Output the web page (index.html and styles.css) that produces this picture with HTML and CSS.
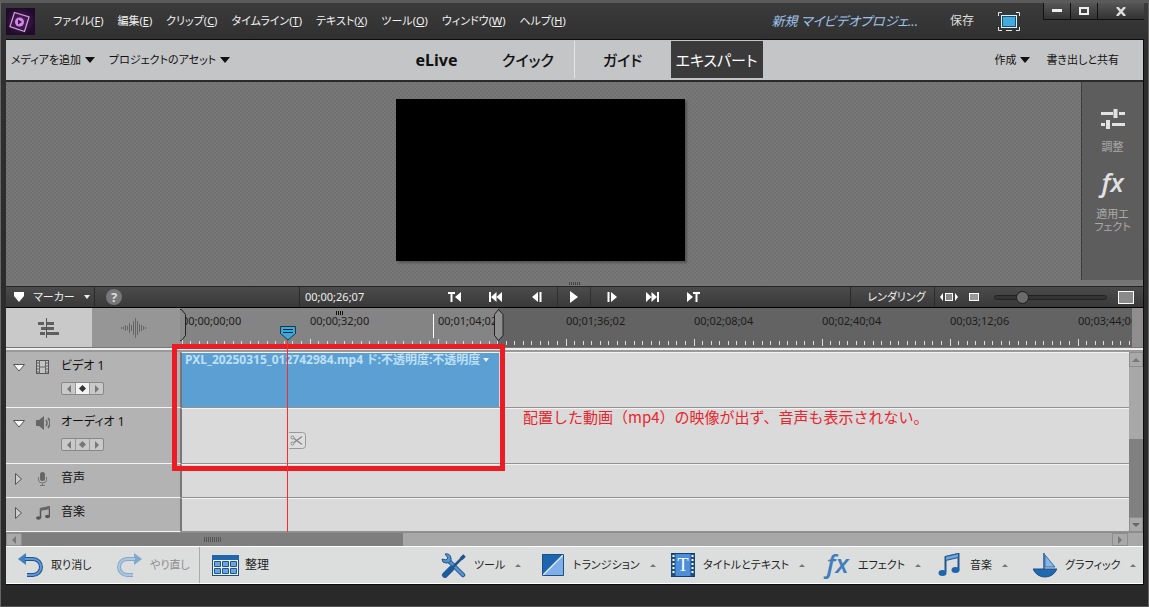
FILE: index.html
```html
<!DOCTYPE html>
<html lang="ja">
<head>
    <meta charset="utf-8">
    <title>新規 マイビデオプロジェクト</title>
    <link rel="stylesheet" href="styles.css">
</head>
<body>
<div class="app">
    <header class="titlebar">
        <svg class="logo" viewBox="0 0 29 27">
            <defs><radialGradient id="lg"><stop offset="0" stop-color="#5b2168"/><stop offset="1" stop-color="#210b2d"/></radialGradient></defs>
            <rect width="29" height="27" fill="url(#lg)"/>
            <path d="M8.500 4.500L23 9l-4.500 14.500L4 18.500z" fill="none" stroke="#c9a3d4" stroke-width="1.300"/>
            <circle cx="13.500" cy="14" r="4.500" fill="#d08be6"/>
            <path d="M12 11.500l4 2.500-4 2.500z" fill="#3a1248"/>
        </svg>
        <nav class="menu">
            <button>ファイル(<u>F</u>)</button>
            <button>編集(<u>E</u>)</button>
            <button>クリップ(<u>C</u>)</button>
            <button>タイムライン(<u>T</u>)</button>
            <button>テキスト(<u>X</u>)</button>
            <button>ツール(<u>O</u>)</button>
            <button>ウィンドウ(<u>W</u>)</button>
            <button>ヘルプ(<u>H</u>)</button>
        </nav>
        <span class="project">新規 マイビデオプロジェ...</span>
        <button class="save">保存</button>
        <button class="fullscreen" aria-label="全画面">
            <svg width="22" height="19" viewBox="0 0 22 19">
                <path d="M.5 4V.5H4M18 .5h3.500V4M21.500 15v3.500H18M4 18.500H.5V15M8 18.500h6" fill="none" stroke="#e8e8e8"/>
                <rect x="3.500" y="3.500" width="15" height="12" fill="#42aade" stroke="#d5f2ff"/>
                <rect x="4.500" y="4.500" width="13" height="10" fill="none" stroke="#1d4f6b"/>
            </svg>
        </button>
        <div class="winbtns">
            <button class="win min" aria-label="最小化"><svg width="10" height="4"><rect width="10" height="3" fill="#eee"/></svg></button>
            <button class="win max" aria-label="最大化"><svg width="10" height="8"><rect x="1" y="1" width="8" height="6" fill="none" stroke="#eee" stroke-width="2"/></svg></button>
            <button class="win close" aria-label="閉じる"><svg width="10" height="9"><path d="M1 0l8 9M9 0L1 9" stroke="#ddd" stroke-width="2.500"/></svg></button>
        </div>
    </header>

    <main class="work">
        <div class="modebar">
            <div class="side">
                <button class="drop">メディアを追加<i class="down"></i></button>
                <button class="drop">プロジェクトのアセット<i class="down"></i></button>
            </div>
            <div class="modes">
                <button class="mode live">eLive</button>
                <button class="mode quick">クイック</button>
                <button class="mode guide">ガイド</button>
                <button class="mode expert">エキスパート</button>
            </div>
            <div class="side end">
                <button class="drop">作成<i class="down"></i></button>
                <button class="drop">書き出しと共有</button>
            </div>
        </div>

        <div class="monitor">
            <div class="stage"><div class="preview"></div></div>
            <aside class="tools">
                <button class="tool">
                    <svg width="24" height="20" viewBox="0 0 24 20"><path d="M0 4.500h12M18 4.500h6M0 15.500h4M11 15.500h13" stroke="#e2e2e2" stroke-width="3"/><path d="M14.500 0v9M7 11v9" stroke="#e2e2e2" stroke-width="4"/></svg>
                    調整
                </button>
                <button class="tool">
                    <span class="fx">fx</span>
                    適用エ<br>フェクト
                </button>
            </aside>
        </div>
        <div class="splitter"><svg width="12" height="3"><path d="M.5 0v3M2.500 0v3M4.500 0v3M6.500 0v3M8.500 0v3M10.500 0v3" stroke="#444"/></svg></div>

        <div class="transport">
            <button class="marker"><svg width="10" height="10"><path d="M0 0h10v4L5 10 0 4z" fill="#fff"/></svg>マーカー<i class="small-down"></i></button>
            <div class="helpcell"><button class="help">?</button></div>
            <span class="time">00;00;26;07</span>
            <button class="tb" aria-label="前のマーカー"><svg width="13" height="10"><path d="M0 0h7v2H4.500v8h-2V2H0zM13 0v10L7 5z"/></svg></button>
            <button class="tb" aria-label="前の編集点"><svg width="13" height="10"><path d="M0 0h2v10H0zM7.500 0v10L2 5zM13 0v10L7.500 5z"/></svg></button>
            <button class="tb" aria-label="コマ戻し"><svg width="10" height="10"><path d="M6 0v10L0 5zM7.500 0h2v10h-2z"/></svg></button>
            <button class="tb play" aria-label="再生"><svg width="8" height="12"><path d="M0 0l8 6-8 6z"/></svg></button>
            <button class="tb" aria-label="コマ送り"><svg width="10" height="10"><path d="M4 0v10l6-5zM.5 0h2v10h-2z"/></svg></button>
            <button class="tb" aria-label="次の編集点"><svg width="13" height="10"><path d="M11 0h2v10h-2zM0 0v10l5.500-5zM5.500 0v10L11 5z"/></svg></button>
            <button class="tb" aria-label="次のマーカー"><svg width="13" height="10"><path d="M6 0h7v2h-2.500v8h-2V2H6zM0 0v10l6-5z"/></svg></button>
            <button class="render">レンダリング</button>
            <div class="zoom">
                <svg width="18" height="8"><path d="M3 0v8L0 4zM15 0v8l3-4z" fill="#fff"/><rect x="5.500" y=".5" width="7" height="7" fill="#888" stroke="#fff"/></svg>
                <svg width="10" height="8"><rect x=".5" y=".5" width="9" height="7" fill="#999" stroke="#fff"/></svg>
                <input class="range" type="range" min="0" max="100" value="21" aria-label="ズーム">
                <svg width="16" height="13"><rect x=".5" y=".5" width="15" height="12" fill="#8a8a8a" stroke="#fff"/></svg>
            </div>
        </div>

        <section class="timeline">
            <div class="rulerrow">
                <button class="view on" aria-label="タイムライン表示"><svg width="22" height="20"><path d="M0 5.500h6M9 5.500h7M3 10.500h13M2 15.500h5M9 15.500h12" stroke="#5f5f5f" stroke-width="3"/><path d="M8.500 0v20" stroke="#555"/></svg></button>
                <button class="view" aria-label="オーディオ表示"><svg width="26" height="20"><path d="M.5 9v2M2.500 8.500v3M4.500 7v6M6.500 8v4M8.500 5v10M10.500 7v6M12.500 3v14M14.500 0v20M16.500 3v14M18.500 6v8M20.500 7v6M22.500 8v4M24.500 9v2" stroke="#666"/></svg></button>
                <div class="ruler">
                    <span>00;00;00;00</span><span>00;00;32;00</span><span>00;01;04;02</span><span>00;01;36;02</span><span>00;02;08;04</span><span>00;02;40;04</span><span>00;03;12;06</span><span>00;03;44;06</span>
                    <svg class="ticks" width="100%" height="8">
                        <defs><pattern id="tk" width="128" height="8" patternUnits="userSpaceOnUse" x="1"><path d="M.5 0v7M8.500 2v4M17.500 2v4M25.500 2v4M34.500 2v4M42.500 2v4M51.500 2v4M59.500 2v4M68.500 2v4M76.500 2v4M85.500 2v4M93.500 2v4M102.500 2v4M110.500 2v4M119.500 2v4" stroke="#ddd"/></pattern></defs>
                        <rect width="100%" height="8" fill="url(#tk)"/>
                    </svg>
                </div>
                <div class="corner"></div>
            </div>
            <div class="stripe"></div>
            <div class="tracks">
                <div class="rows">
                    <div class="track tall">
                        <div class="head">
                            <svg class="tri" width="12" height="8"><path d="M.5.500h11L6 7z" fill="#fff" stroke="#555"/></svg>
                            <svg class="ico" width="13" height="15"><rect x=".5" y=".5" width="12" height="13" fill="#c4c4c4" stroke="#555"/><path d="M3.500 0v14M9.500 0v14M4 7h5M1 3h2M1 6h2M1 9h2M1 12h2M10 3h2M10 6h2M10 9h2M10 12h2" stroke="#666"/></svg>
                            <div class="info">ビデオ 1
                                <div class="keys"><button aria-label="前へ"><i class="kl"></i></button><button class="sel" aria-label="キー"><i class="kd"></i></button><button aria-label="次へ"><i class="kr"></i></button></div>
                            </div>
                        </div>
                        <div class="lane"><div class="clip"><span>PXL_20250315_012742984.mp4</span><span class="fxname">ド:不透明度:不透明度</span><i class="small-down"></i></div></div>
                    </div>
                    <div class="track tall">
                        <div class="head">
                            <svg class="tri" width="12" height="8"><path d="M.5.500h11L6 7z" fill="#fff" stroke="#555"/></svg>
                            <svg class="ico" width="15" height="14"><path d="M0 4h3l5-4v14l-5-4H0z" fill="#666"/><path d="M10 4q2 3 0 6M12 2q4 5 0 10" fill="none" stroke="#666" stroke-width="1.500"/></svg>
                            <div class="info">オーディオ 1
                                <div class="keys"><button aria-label="前へ"><i class="kl"></i></button><button aria-label="キー"><i class="kd"></i></button><button aria-label="次へ"><i class="kr"></i></button></div>
                            </div>
                        </div>
                        <div class="lane"></div>
                    </div>
                    <div class="track">
                        <div class="head">
                            <svg class="tri" width="12" height="12"><path d="M2.500.500v11l6-5.500z" fill="#ccc" stroke="#555"/></svg>
                            <svg class="ico" width="13" height="14"><rect x="4" y="0" width="5" height="9" rx="2.500" fill="#666"/><path d="M2.500 5v3q0 3 4 3t4-3V5M6.500 11v3M4 13.500h5" fill="none" stroke="#777"/></svg>
                            <div class="info">音声</div>
                        </div>
                        <div class="lane"></div>
                    </div>
                    <div class="track">
                        <div class="head">
                            <svg class="tri" width="12" height="12"><path d="M2.500.500v11l6-5.500z" fill="#ccc" stroke="#555"/></svg>
                            <svg class="ico" width="14" height="14"><path d="M4.500 12V3l9-2v9" fill="none" stroke="#555" stroke-width="1.500"/><path d="M4 2l10-2v3L4 5z" fill="#666"/><ellipse cx="2.500" cy="12" rx="2.500" ry="1.800" fill="#555"/><ellipse cx="11.500" cy="10.500" rx="2.500" ry="1.800" fill="#555"/></svg>
                            <div class="info">音楽</div>
                        </div>
                        <div class="lane"></div>
                    </div>
                </div>
                <div class="vscroll"><button aria-label="上へ"><i class="up"></i></button><div class="vthumb"></div><button aria-label="下へ"><i class="down grey"></i></button></div>
            </div>
            <div class="hscroll">
                <button aria-label="左へ"><i class="kl"></i></button>
                <div class="hthumb"><svg width="18" height="5"><path d="M.5 0v5M2.500 0v5M4.500 0v5M6.500 0v5M8.500 0v5M10.500 0v5M12.500 0v5M14.500 0v5M16.500 0v5" stroke="#555"/></svg></div>
                <button class="last" aria-label="右へ"><i class="kr"></i></button>
            </div>

            <!-- things that float over the tracks -->
            <svg class="grip" width="8" height="4"><path d="M.5 0v4M2.500 0v4M4.500 0v4M6.500 0v4" stroke="#111"/></svg>
            <div class="tickmark"></div>
            <svg class="handle left" width="6" height="32"><path d="M0 .5h1.500l4 5v21l-4 5H0" fill="#8b8b8b" stroke="#222"/></svg>
            <svg class="handle right" width="10" height="32"><path d="M4.500.500l4.500 5v21l-4.500 5-4-5v-21z" fill="#8f8f8f" stroke="#222"/></svg>
            <div class="redbox"></div>
            <div class="playline"></div>
            <svg class="playhead" width="16" height="16"><path d="M.5 1.500h15v7l-7.500 6.500-7.500-6.500z" fill="#35a9dc" stroke="#153a4a"/><path d="M3 4.500h10M3 7.500h10" stroke="#123"/></svg>
            <button class="scissors" aria-label="分割"><svg width="17" height="17"><path d="M0 .5h13.500q3 0 3 3v10q0 3-3 3H0" fill="#dedede" stroke="#999"/><circle cx="3.500" cy="5.500" r="1.500" fill="none" stroke="#888"/><circle cx="3.500" cy="11.500" r="1.500" fill="none" stroke="#888"/><path d="M5 6.500l8 6M5 10.500l8-6" stroke="#888" stroke-width="1.500"/></svg></button>
            <p class="note">配置した動画（mp4）の映像が出ず、音声も表示されない。</p>
        </section>

        <footer class="actions">
            <button class="act undo"><svg width="25" height="25"><path d="M8 0v12L0 6z" fill="#3f7fc0"/><path d="M7 6h8a7.500 7.500 0 0 1 0 16H9" fill="none" stroke="#24548c" stroke-width="4"/><path d="M7 6h8a7.500 7.500 0 0 1 0 16H9" fill="none" stroke="#5b9ad8" stroke-width="2"/></svg>取り消し</button>
            <button class="act redo" disabled><svg width="25" height="25"><path d="M17 0v12l8-6z" fill="#7fa9d0"/><path d="M18 6h-8a7.500 7.500 0 0 0 0 16h6" fill="none" stroke="#8ba6c4" stroke-width="4"/><path d="M18 6h-8a7.500 7.500 0 0 0 0 16h6" fill="none" stroke="#a9c8e6" stroke-width="2"/></svg>やり直し</button>
            <button class="act organize"><svg width="27" height="21"><rect x=".5" y=".5" width="26" height="20" fill="#e9f1fa" stroke="#1c4f86"/><path d="M0 0h27v5H0z" fill="#2166a8"/><path d="M2.500 6.500h6v5h-6zM10.500 6.500h6v5h-6zM18.500 6.500h6v5h-6zM2.500 13.500h6v5h-6zM10.500 13.500h6v5h-6zM18.500 13.500h6v5h-6z" fill="#6aa3e0" stroke="#24548c"/></svg>整理</button>
            <div class="panels">
                <button class="act"><svg width="25" height="25"><path d="M8 8l14 14" stroke="#24548c" stroke-width="4.500" stroke-linecap="round"/><path d="M8 8l14 14" stroke="#5793cf" stroke-width="2.500" stroke-linecap="round"/><path d="M4 1q5-1 6 4t-5 5q-4 0-4-4l4 1 2-2z" fill="#5793cf" stroke="#24548c"/><path d="M23 3L11 15" stroke="#24548c" stroke-width="2.500"/><path d="M20 6l3.500-3.500" stroke="#24548c" stroke-width="3.500"/><path d="M10 16l-6 6" stroke="#1d5a9c" stroke-width="6" stroke-linecap="round"/></svg>ツール<i class="up"></i></button>
                <button class="act"><svg width="24" height="24"><path d="M1 1h22v22H1z" fill="#80aee8"/><path d="M1 1h22L1 23z" fill="#1d66ad"/><path d="M1 23L23 1" stroke="#e3f0ff" stroke-width="1.200"/><path d="M1.500 1.500h21v21h-21z" fill="none" stroke="#1c4f86"/></svg>トランジション<i class="up"></i></button>
                <button class="act"><svg width="24" height="24"><rect x=".5" y=".5" width="23" height="23" fill="#4c8fd8" stroke="#163f70"/><path d="M2.500 1v22M21.500 1v22" stroke="#1c4f86" stroke-width="4"/><path d="M2.500 2v20M21.500 2v20" stroke="#fff" stroke-width="2" stroke-dasharray="2"/><text class="tee" x="12" y="18" text-anchor="middle">T</text></svg>タイトルとテキスト<i class="up"></i></button>
                <button class="act"><span class="fx blue">fx</span>エフェクト<i class="up"></i></button>
                <button class="act"><svg width="24" height="24"><path d="M7.500 19V4l13-3v16" fill="none" stroke="#24548c" stroke-width="2"/><path d="M7.500 3.500l13-3v4l-13 3z" fill="#6ba4df" stroke="#24548c"/><ellipse cx="4.500" cy="20" rx="4" ry="3" fill="#1d66ad"/><ellipse cx="17.500" cy="17" rx="4" ry="3" fill="#1d66ad"/></svg>音楽<i class="up"></i></button>
                <button class="act"><svg width="24" height="25"><path d="M11 0v16" stroke="#24548c" stroke-width="1.500"/><path d="M12 2l10 12H12z" fill="#86b5ea" stroke="#386da5"/><path d="M0 16h24q-4 8-12 8T0 16z" fill="#1f69b1" stroke="#1c4f86"/></svg>グラフィック<i class="up"></i></button>
            </div>
        </footer>
    </main>
</div>
</body>
</html>
```
FILE: styles.css
```css
*{
    box-sizing:border-box;
}
body{
    margin:0;
    font-family:"Noto Sans","Noto Sans CJK JP",sans-serif;
    font-size:12px;
    line-height:16px;
    font-feature-settings:"palt";
    background:#2a2a2a;
}
button{
    padding:0;
    border:0;
    background:none;
    color:inherit;
    font:inherit;
    font-feature-settings:inherit;
    white-space:nowrap;
}
svg{
    display:block;
    flex:none;
}

/* window frame */
.app{
    display:flex;
    flex-direction:column;
    height:100vh;
    padding:0 4px 21px 5px;
    background:linear-gradient(#3b3b3b,#2f2f2f 40px,#292929);
    border-top:3px solid #5b5b5b;
    border-bottom:1px solid #555;
    border-left:1px solid #666;
    border-right:1px solid #666;
}
.titlebar{
    display:flex;
    align-items:center;
    flex:none;
    height:36px;
    color:#f2f2f2;
}
.logo{
    width:29px;
    height:27px;
}
.menu{
    display:flex;
    gap:14px;
    margin-left:18px;
    font-size:11px;
}
.project{
    margin-left:auto;
    color:#9fc3ee;
    font-size:13px;
    font-style:italic;
}
.save{
    margin-left:32px;
    color:#ddd;
}
.fullscreen{
    margin-left:24px;
}
.winbtns{
    display:flex;
    align-self:flex-start;
    margin-left:23px;
}
.win{
    display:flex;
    justify-content:center;
    align-items:center;
    width:27px;
    height:17px;
    background:linear-gradient(#555,#333);
    border:solid #111;
    border-width:0 0 1px 1px;
}
.close{
    width:47px;
}

.work{
    display:flex;
    flex-direction:column;
    flex:1;
    min-height:0;
    border:1px solid #0c0c0c;
    border-width:1px 1px 1px 0;
}
.modebar{
    display:flex;
    flex:none;
    height:42px;
    background:#c4c5c7;
    border-bottom:2px solid #2b2b2b;
    color:#111;
}
.side{
    display:flex;
    align-items:center;
    flex:1;
    gap:14px;
    padding-left:5px;
    font-size:11px;
}
.end{
    justify-content:flex-end;
    gap:16px;
    padding-right:24px;
}
.drop{
    display:flex;
    align-items:center;
    gap:4px;
}
.down{
    border:5px solid transparent;
    border-top:6px solid #111;
    border-bottom:0;
}
.small-down{
    border:3px solid transparent;
    border-top:4px solid #eee;
    border-bottom:0;
}
.up{
    border:4px solid transparent;
    border-bottom:4px solid #777;
    border-top:0;
}
.panels .up{
    border-width:3px;
    border-top:0;
    margin-left:2px;
}
.grey{
    border-width:4px;
    border-bottom:0;
    border-top-color:#666;
}
.modes{
    display:flex;
    padding:1px 0 2px 28px;
}
.mode{
    width:92px;
    font-size:15px;
    font-weight:500;
}
.live{
    font-size:16px;
    font-weight:bold;
}
.quick{
    border-right:1px solid #e6e6e6;
}
.guide{
    width:96px;
}
.expert{
    background:#3a3a3a;
    color:#fff;
    font-weight:normal;
}

.monitor{
    display:flex;
    flex:1;
    min-height:0;
}
.stage{
    display:flex;
    justify-content:center;
    align-items:center;
    flex:1;
    padding:0 6px 2px 0;
    background-color:#787878;
    background-image:conic-gradient(#707070 25%,transparent 25% 50%,#707070 50% 75%,transparent 75%);
    background-size:4px 4px;
    border-right:1px solid #404040;
}
.preview{
    height:83%;
    aspect-ratio:16/9;
    background:#000;
    box-shadow:2px 2px 2px #555;
}
.tools{
    display:flex;
    flex-direction:column;
    gap:16px;
    width:61px;
    padding-top:27px;
    background:#5d5d5d;
}
.tool{
    display:flex;
    flex-direction:column;
    align-items:center;
    color:#aaa;
    font-size:11px;
    line-height:13px;
    white-space:normal;
}
.tool svg{
    margin-bottom:11px;
}
.fx{
    margin-bottom:12px;
    color:#e2e2e2;
    font-family:"Open Sans","Noto Sans",sans-serif;
    font-size:26px;
    font-style:italic;
    font-weight:600;
    line-height:26px;
}
.splitter{
    display:flex;
    justify-content:center;
    align-items:center;
    flex:none;
    height:6px;
    background:#757575;
}

.transport{
    display:flex;
    flex:none;
    height:22px;
    background:linear-gradient(#4b4b4b,#393939);
    border-top:1px solid #252525;
    border-bottom:1px solid #000;
    color:#eee;
    font-size:11px;
    line-height:20px;
}
.marker{
    display:flex;
    align-items:center;
    gap:9px;
    width:89px;
    padding-left:8px;
    border-right:1px solid #2a2a2a;
}
.helpcell{
    display:flex;
    align-items:center;
    width:205px;
    padding-left:11px;
    border-right:1px solid #2a2a2a;
}
.help{
    width:16px;
    height:16px;
    border-radius:8px;
    background:#777;
    color:#ddd;
    font-size:13px;
    font-weight:bold;
    line-height:16px;
}
.time{
    width:134px;
    padding-left:5px;
}
.tb{
    display:flex;
    justify-content:center;
    align-items:center;
    width:41px;
    fill:#fff;
}
.play{
    width:34px;
    border:solid #303030;
    border-width:0 1px;
}
.render{
    width:85px;
    margin-left:auto;
    padding-left:8px;
    border:solid #2a2a2a;
    border-width:0 1px;
}
.zoom{
    display:flex;
    align-items:center;
    gap:11px;
    width:208px;
    padding-left:5px;
}
.range{
    width:113px;
    height:14px;
    margin:0 0 0 4px;
    appearance:none;
    background:none;
}
.range::-webkit-slider-runnable-track{
    height:5px;
    border:1px solid #222;
    border-radius:3px;
    background:#353535;
}
.range::-webkit-slider-thumb{
    appearance:none;
    width:13px;
    height:13px;
    margin-top:-5px;
    border:1px solid #1c1c1c;
    border-radius:7px;
    background:#6b6b6b;
}

/* timeline */
.timeline{
    position:relative;
    flex:none;
}
.rulerrow{
    display:flex;
    height:39px;
}
.view{
    display:flex;
    justify-content:center;
    align-items:center;
    width:89px;
    padding-right:5px;
    background:#969696;
}
.on{
    width:86px;
    padding:0;
    background:#c9c9c9;
}
.ruler{
    position:relative;
    display:flex;
    flex:1;
    min-width:0;
    overflow:hidden;
    padding-left:1px;
    background:linear-gradient(90deg,#848484 317px,#636363 317px);
    color:#1c1c1c;
    font-size:11px;
    line-height:26px;
}
.ruler span{
    flex:none;
    width:128px;
}
.ticks{
    position:absolute;
    left:0;
    bottom:0;
}
.corner{
    width:11px;
    background:#8f8d8e;
}
.stripe{
    height:5px;
    background:#eee;
    border-top:1px solid #777;
    border-bottom:2px solid #999;
}
.tracks{
    display:flex;
}
.rows{
    flex:1;
    min-width:0;
}
.track{
    display:flex;
    height:34px;
}
.tall{
    height:56px;
}
.head{
    display:flex;
    gap:11px;
    width:175px;
    padding:6px 0 0 7px;
    background:#b3b3b3;
    border-bottom:1px solid #f4f4f4;
    border-right:1px solid #777;
}
.tri{
    margin-top:3px;
}
.ico{
    width:14px;
    margin-top:2px;
}
.info{
    color:#111;
}
.tall .tri{
    margin-top:6px;
}
.keys{
    display:flex;
    width:43px;
    height:13px;
    margin-top:8px;
    border:1px solid #888;
    border-radius:2px;
    background:#c9c9c9;
}
.keys button{
    display:flex;
    justify-content:center;
    align-items:center;
    flex:1;
    border-right:1px solid #999;
}
.keys button:last-child{
    border-right:0;
}
.keys .sel{
    background:#f2f2f2;
}
.kl,.kr{
    border:4px solid transparent;
    border-right:4px solid #777;
    border-left:0;
}
.kr{
    border-left:4px solid #777;
    border-right:0;
}
.kd{
    width:5px;
    height:5px;
    background:#777;
    transform:rotate(45deg);
}
.sel .kd{
    background:#333;
}
.lane{
    flex:1;
    min-width:0;
    background:#dadada;
    border-top:1px solid #f2f2f2;
    border-bottom:1px solid #929292;
    border-left:1px solid #777;
}
.clip{
    display:flex;
    width:317px;
    height:100%;
    padding-left:3px;
    background:#5b9fd3;
    color:#bfe0f5;
    font-size:12px;
    font-weight:bold;
    line-height:13px;
    white-space:nowrap;
}
.clip .small-down{
    margin:5px 0 0 3px;
    align-self:flex-start;
}
.fxname{
    margin-left:4px;
}
.vscroll{
    display:flex;
    flex-direction:column;
    width:14px;
    background:#a8a8a8;
}
.vscroll button,.hscroll button{
    display:flex;
    justify-content:center;
    align-items:center;
    width:14px;
    height:15px;
    background:#a9a9a9;
    border:1px solid #8d8d8d;
}
.vthumb{
    height:78px;
    margin-top:auto;
    background:#808080;
}
.hscroll{
    display:flex;
    height:14px;
    background:#a8a8a8;
    border-top:1px solid #8d8d8d;
}
.hscroll button{
    width:16px;
    height:13px;
}
.hthumb{
    display:flex;
    justify-content:center;
    align-items:center;
    width:381px;
    background:#7e7e7e;
}
.hscroll .last{
    margin:0 15px 0 auto;
}

.grip,.tickmark,.handle,.redbox,.playline,.playhead,.scissors,.note{
    position:absolute;
}
.grip{
    left:330px;
    top:3px;
}
.tickmark{
    left:427px;
    top:6px;
    width:1px;
    height:24px;
    background:#fff;
}
.handle{
    top:1px;
}
.left{
    left:174px;
}
.right{
    left:488px;
}
.redbox{
    left:166px;
    top:36px;
    width:333px;
    height:127px;
    border:5px solid #ec1c24;
}
.playline{
    left:281px;
    top:28px;
    bottom:14px;
    border-left:1px solid #ff2a2a;
}
.playhead{
    left:274px;
    top:17px;
}
.scissors{
    left:283px;
    top:124px;
}
.note{
    left:517px;
    top:99px;
    margin:0;
    color:#e8252c;
    font-family:"Noto Sans CJK JP",sans-serif;
    font-feature-settings:normal;
    font-size:15px;
    line-height:20px;
}

.actions{
    display:flex;
    flex:none;
    height:38px;
    background:#dcdedd;
    border-top:1px solid #fff;
    border-bottom:1px solid #fff;
    color:#222;
}
.act{
    display:flex;
    align-items:center;
    gap:8px;
    font-size:12px;
}
.undo{
    width:98px;
    padding-left:12px;
}
.redo{
    width:96px;
    padding-left:13px;
    border-right:1px solid #aaa;
    color:#8d8d8d;
}
.undo,.redo{
    font-size:11px;
}
.organize{
    gap:6px;
    padding-left:12px;
}
.panels{
    display:grid;
    grid-template-columns:100px 130px 154px 113px 95px 110px;
    margin-left:auto;
}
.panels .act{
    font-size:11px;
}
.tee{
    font-family:"Liberation Serif",serif;
    font-size:18px;
    fill:#fff;
}
.act .blue{
    width:25px;
    margin-bottom:4px;
    color:#3f7dbb;
}
```
